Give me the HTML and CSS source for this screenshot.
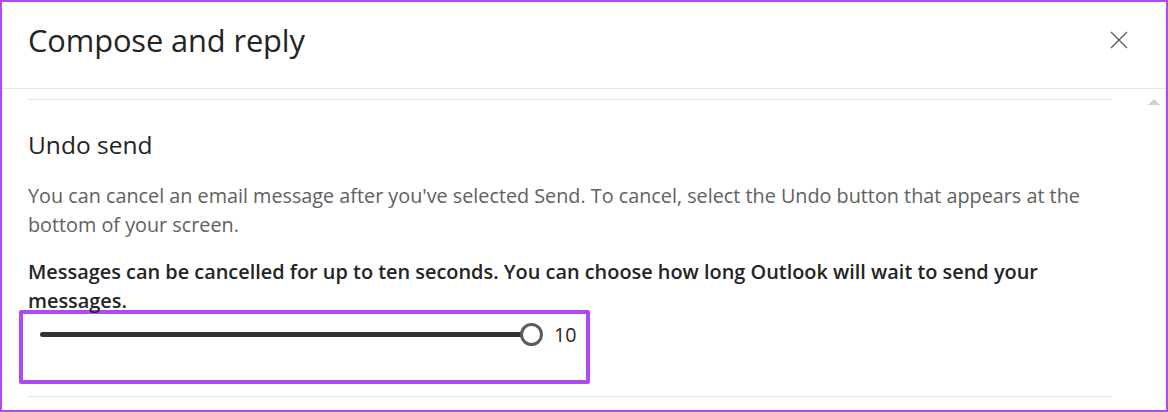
FILE: index.html
```html
<!DOCTYPE html>
<html lang="en">
<head>
<meta charset="utf-8">
<title>Compose and reply</title>
<link rel="stylesheet" href="styles.css">
</head>
<body>
<div class="dialog">
  <header class="dialog-header">
    <h1 class="dialog-title">Compose and reply</h1>
    <button class="close-btn" aria-label="Close">
      <svg width="18" height="18" viewBox="0 0 18 18"><path d="M1 1 L17 17 M17 1 L1 17" stroke="#5a5a5a" stroke-width="1.3" fill="none"/></svg>
    </button>
  </header>
  <div class="dialog-body">
    <div class="content">
      <div class="sep"></div>
      <section class="setting">
        <h2 class="setting-title">Undo send</h2>
        <p class="desc">You can cancel an email message after you've selected Send. To cancel, select the Undo button that appears at the bottom of your screen.</p>
        <p class="strong">Messages can be cancelled for up to ten seconds. You can choose how long Outlook will wait to send your messages.</p>
        <div class="slider-box">
          <div class="slider">
            <div class="track"></div>
            <div class="thumb"></div>
          </div>
          <span class="value">10</span>
        </div>
      </section>
      <div class="sep sep-bottom"></div>
    </div>
    <div class="scrollbar"><span class="arrow-up"></span></div>
  </div>
</div>
</body>
</html>
```

FILE: styles.css
```css
* { box-sizing: border-box; }
html, body { margin: 0; padding: 0; background: #fff; }
body { font-family: "Open Sans", "Noto Sans", sans-serif; color: #242424; }

.dialog {
  width: 1168px;
  height: 412px;
  border: 2px solid #b048f6;
  overflow: hidden;
  display: flex;
  flex-direction: column;
  background: #fff;
}

.dialog-header {
  height: 87px;
  flex: none;
  display: flex;
  align-items: center;
  justify-content: space-between;
  padding: 0 38px 10px 26px;
  border-bottom: 1px solid #e6e6e6;
}
.dialog-title {
  margin: 0;
  font-size: 30.8px;
  line-height: 40px;
  font-weight: 400;
  color: #242424;
  letter-spacing: -0.1px;
}
.close-btn {
  border: 0;
  background: none;
  padding: 0;
  width: 18px;
  height: 18px;
  display: flex;
}

.dialog-body {
  flex: 1;
  display: flex;
}
.content {
  width: 1109px;
  padding: 10px 0 0 26px;
}
.sep {
  height: 1px;
  background: #e3e3e3;
}
.setting-title {
  margin: 30px 0 0;
  font-size: 24.5px;
  line-height: 30px;
  font-weight: 400;
  color: #242424;
}
.desc {
  margin: 21px 0 0;
  font-size: 19.8px;
  line-height: 29px;
  color: #616161;
}
.strong {
  margin: 18px 0 0;
  font-size: 19.9px;
  line-height: 29px;
  font-weight: 600;
  color: #242424;
}
.slider-box {
  margin: -5px 0 0 -9px;
  width: 571px;
  height: 74px;
  border: 4px solid #b048f6;
  border-radius: 2px;
  display: flex;
  align-items: flex-start;
  padding: 9px 0 0 17px;
}
.slider {
  position: relative;
  width: 503px;
  height: 23px;
}
.track {
  position: absolute;
  left: 0;
  right: 11px;
  top: 9px;
  height: 5px;
  border-radius: 3px;
  background: #333333;
}
.thumb {
  position: absolute;
  right: 0;
  top: 0;
  width: 23px;
  height: 23px;
  border-radius: 50%;
  border: 3px solid #5c5c5c;
  background: #fff;
}
.value {
  margin-left: 11px;
  font-size: 19.6px;
  line-height: 23px;
  color: #242424;
}
.sep-bottom {
  margin-top: 12px;
}

.scrollbar {
  flex: 1;
  position: relative;
}
.arrow-up {
  position: absolute;
  left: 37px;
  top: 10px;
  width: 0;
  height: 0;
  border-left: 6.5px solid transparent;
  border-right: 6.5px solid transparent;
  border-bottom: 6px solid #c9d1d5;
}
```
